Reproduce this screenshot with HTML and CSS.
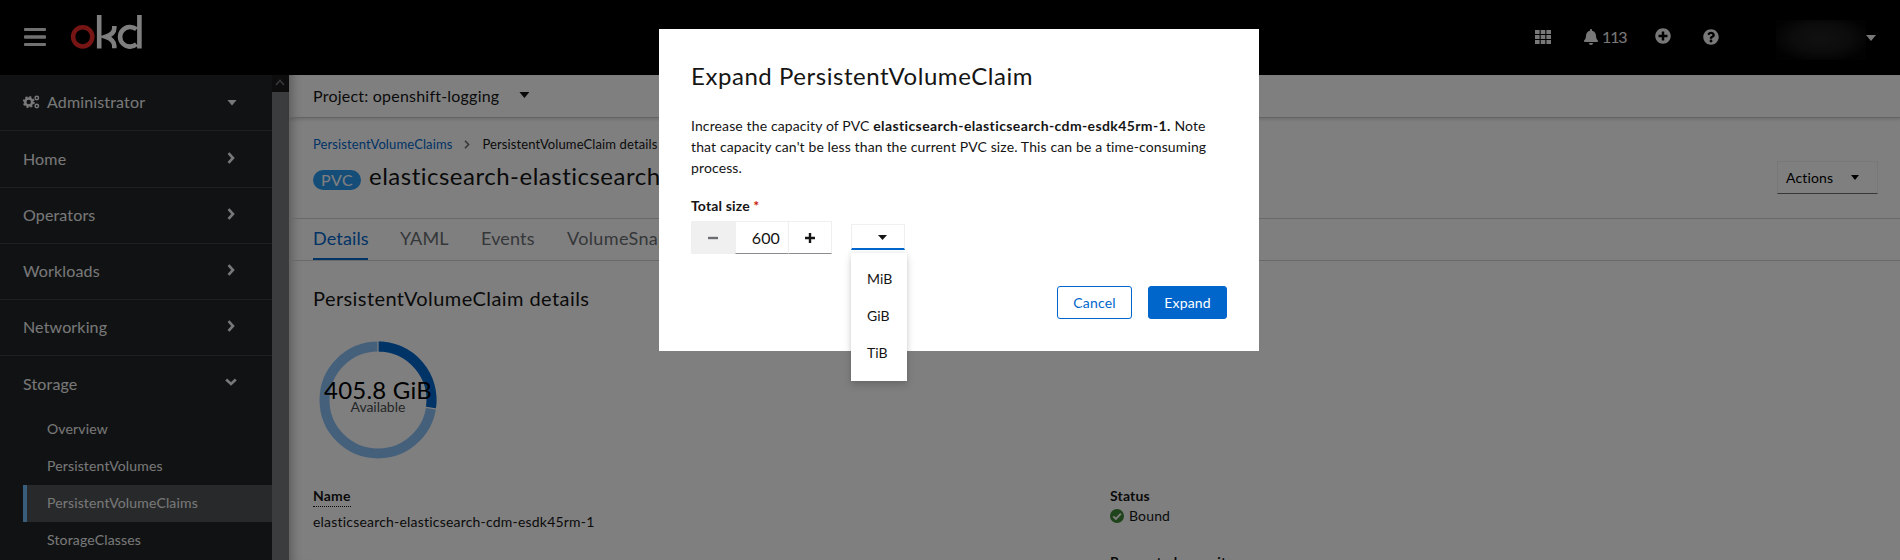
FILE: index.html
```html
<!DOCTYPE html>
<html lang="en">
<head>
<meta charset="utf-8">
<title>PersistentVolumeClaim details</title>
<link rel="stylesheet" href="styles.css">
</head>
<body>
<div class="app">
  <header class="masthead">
    <svg class="burger" width="22" height="20" viewBox="0 0 22 20"><rect y="1" width="22" height="3" rx="1"/><rect y="8.2" width="22" height="3.6" rx="1"/><rect y="16" width="22" height="3" rx="1"/></svg>
    <svg class="logo" width="74" height="36" viewBox="0 0 74 36" fill="none" stroke="#fff">
      <circle cx="12.7" cy="22.8" r="9.6" stroke="#ee2b2b" stroke-width="4.500"/>
      <path d="M29.200 1v33.500" stroke-width="4.600"/>
      <path d="M44.300 12v2q0 6-8.500 8.800q8.500 3 8.500 9v2.500" stroke-width="4.600"/>
      <path d="M66.500 15.300a10 9.800 0 1 0 0 15M69.400 1v33.500" stroke-width="4.600"/>
    </svg>
    <div class="tools">
      <svg class="grid" width="16" height="14" viewBox="0 0 16 14"><path d="M0 0h4.600v4H0zM5.700 0h4.600v4H5.700zM11.400 0H16v4h-4.600zM0 5h4.600v4H0zM5.700 5h4.600v4H5.700zM11.400 5H16v4h-4.600zM0 10h4.600v4H0zM5.700 10h4.600v4H5.700zM11.400 10H16v4h-4.600z"/></svg>
      <svg class="bell" width="14" height="16" viewBox="0 0 448 512"><path d="M224 512c35.320 0 63.970-28.650 63.970-64H160.030c0 35.350 28.650 64 63.970 64zm215.390-149.710c-19.320-20.760-55.470-51.990-55.470-154.290 0-77.700-54.480-139.900-127.940-155.160V32c0-17.670-14.320-32-31.980-32s-31.980 14.330-31.980 32v20.840C118.560 68.100 64.080 130.300 64.080 208c0 102.300-36.150 133.530-55.470 154.290-6 6.450-8.660 14.160-8.610 21.710.11 16.400 12.980 32 32.100 32h383.800c19.120 0 32-15.600 32.100-32 .05-7.550-2.610-15.270-8.610-21.710z"/></svg>
      <span class="count">113</span>
      <svg class="plus" width="16" height="16" viewBox="0 0 512 512"><path d="M256 8C119 8 8 119 8 256s111 248 248 248 248-111 248-248S393 8 256 8zm144 276c0 6.600-5.400 12-12 12h-92v92c0 6.600-5.400 12-12 12h-56c-6.600 0-12-5.400-12-12v-92h-92c-6.600 0-12-5.400-12-12v-56c0-6.600 5.400-12 12-12h92v-92c0-6.600 5.400-12 12-12h56c6.600 0 12 5.400 12 12v92h92c6.600 0 12 5.400 12 12v56z"/></svg>
      <svg class="help" width="16" height="16" viewBox="0 0 512 512"><path d="M504 256c0 136.997-111.043 248-248 248S8 392.997 8 256C8 119.083 119.043 8 256 8s248 111.083 248 248zM262.655 90c-54.497 0-89.255 22.957-116.549 63.758-3.536 5.286-2.353 12.415 2.715 16.258l34.699 26.310c5.205 3.947 12.621 3.008 16.665-2.122 17.864-22.658 30.113-35.797 57.303-35.797 20.429 0 45.698 13.148 45.698 32.958 0 14.976-12.363 22.667-32.534 33.976C247.128 238.528 216 254.941 216 296v4c0 6.627 5.373 12 12 12h56c6.627 0 12-5.373 12-12v-1.333c0-28.462 83.186-29.647 83.186-106.667 0-58.002-60.165-102-116.531-102zM256 338c-25.365 0-46 20.635-46 46 0 25.364 20.635 46 46 46s46-20.636 46-46c0-25.365-20.635-46-46-46z"/></svg>
      <span class="user"></span>
      <i class="caret"></i>
    </div>
  </header>
  <div class="body">
    <nav class="sidebar">
      <div class="nav-item first"><svg class="cogs" width="17" height="14" viewBox="0 0 17 14"><circle cx="5.700" cy="7" r="3.500" fill="none" stroke="currentColor" stroke-width="2.600"/><circle cx="5.700" cy="7" r="5" fill="none" stroke="currentColor" stroke-width="2" stroke-dasharray="2 1.930"/><circle cx="13.800" cy="3" r="1.700" fill="none" stroke="currentColor" stroke-width="1.500"/><circle cx="13.800" cy="11" r="1.700" fill="none" stroke="currentColor" stroke-width="1.500"/></svg><span>Administrator</span><i class="caret"></i></div>
      <div class="nav-item"><span>Home</span><svg class="chev" viewBox="0 0 8 12"><path d="M1.500 1.200L6 6l-4.500 4.800"/></svg></div>
      <div class="nav-item"><span>Operators</span><svg class="chev" viewBox="0 0 8 12"><path d="M1.500 1.200L6 6l-4.500 4.800"/></svg></div>
      <div class="nav-item"><span>Workloads</span><svg class="chev" viewBox="0 0 8 12"><path d="M1.500 1.200L6 6l-4.500 4.800"/></svg></div>
      <div class="nav-item"><span>Networking</span><svg class="chev" viewBox="0 0 8 12"><path d="M1.500 1.200L6 6l-4.500 4.800"/></svg></div>
      <div class="nav-item open"><span>Storage</span><svg class="chev down" viewBox="0 0 12 8"><path d="M1.200 1.500L6 6l4.800-4.500"/></svg></div>
      <ul class="subnav">
        <li>Overview</li><li>PersistentVolumes</li><li class="active">PersistentVolumeClaims</li><li>StorageClasses</li>
      </ul>
    </nav>
    <div class="scrollbar"><div class="scroll-up"><svg width="10" height="7" viewBox="0 0 10 7"><path d="M1 6l4-4.500L9 6"/></svg></div></div>
    <main class="main">
      <div class="project"><span>Project: openshift-logging</span><i class="caret"></i></div>
      <div class="crumbs"><a>PersistentVolumeClaims</a><svg width="6" height="9" viewBox="0 0 6 9"><path d="M1 .7l3.600 3.800L1 8.300"/></svg><span>PersistentVolumeClaim details</span></div>
      <div class="title-row">
        <span class="badge">PVC</span><h1>elasticsearch-elasticsearch-cdm-esdk45rm-1</h1>
        <button class="actions"><span>Actions</span><i class="caret"></i></button>
      </div>
      <div class="tabs"><span class="tab current">Details</span><span class="tab t-yaml">YAML</span><span class="tab t-events">Events</span><span class="tab t-snap">VolumeSnapshots</span></div>
      <section class="details">
        <h2>PersistentVolumeClaim details</h2>
        <svg class="donut" width="130" height="130" viewBox="-65 -65 130 130">
          <g fill="none" stroke-width="10">
            <circle r="53.500" stroke="#8bc1f7"/>
            <path d="M0 -53.500A53.500 53.500 0 0 1 52.900 8.200" stroke="#06c"/>
          </g>
          <path d="M0 -59v11M48 7.400l11 1.800" stroke="#fff" stroke-width="1.200"/>
          <text class="amount" x="0" y="-1" textLength="108">405.8 GiB</text>
          <text class="avail" x="0" y="12" textLength="55">Available</text>
        </svg>
        <div class="facts">
          <dl class="fact-name"><dt><span>Name</span></dt><dd>elasticsearch-elasticsearch-cdm-esdk45rm-1</dd></dl>
          <dl class="fact-status"><dt>Status</dt><dd><svg width="14" height="14" viewBox="0 0 14 14"><circle cx="7" cy="7" r="7" fill="#3e8635"/><path d="M3.300 7.300l2.600 2.600 5-5.200" fill="none" stroke="#fff" stroke-width="1.900"/></svg>Bound</dd><dt class="req">Requested capacity</dt></dl>
        </div>
      </section>
    </main>
  </div>
</div>
<div class="backdrop">
  <div class="modal">
    <h1>Expand PersistentVolumeClaim</h1>
    <p>Increase the capacity of PVC <b>elasticsearch-elasticsearch-cdm-esdk45rm-1.</b> Note<br>that capacity can't be less than the current PVC size. This can be a time-consuming<br>process.</p>
    <label>Total size <em>*</em></label>
    <div class="size">
      <div class="number"><span class="minus"><svg width="12" height="12"><path d="M1 6h10"/></svg></span><span class="value">600</span><span class="add"><svg width="12" height="12"><path d="M1 6h10M6 1v10"/></svg></span></div>
      <div class="unit"><i class="caret"></i>
        <ul class="menu"><li>MiB</li><li>GiB</li><li>TiB</li></ul>
      </div>
    </div>
    <div class="buttons"><button class="cancel">Cancel</button><button class="expand">Expand</button></div>
  </div>
</div>
</body>
</html>
```
FILE: styles.css
```css
* { box-sizing: border-box; margin: 0; padding: 0; }
body { height: 560px; overflow: hidden; font: 14px/21px Lato, "Open Sans", sans-serif; color: #151515; letter-spacing: .15px; }
ul { list-style: none; }
button { font: inherit; letter-spacing: inherit; }
svg { display: block; flex: none; }
h1, h2 { font-weight: 400; letter-spacing: .5px; }
.caret { display: block; flex: none; width: 10px; height: 6px; background: currentColor; clip-path: polygon(0 0, 100% 0, 50% 100%); }
.app { height: 560px; display: flex; flex-direction: column; overflow: hidden; background: #fff; }

.masthead { flex: none; height: 75px; background: #000; color: #f0f0f0; display: flex; align-items: flex-start; padding-left: 24px; }
.burger { margin-top: 27px; fill: #e2e2e2; }
.logo { margin: 14px 0 0 24px; }
.tools { margin: 0 24px 0 auto; height: 75px; display: flex; align-items: flex-start; fill: #f0f0f0; }
.grid { margin-top: 30px; }
.bell { margin: 29px 0 0 33px; }
.count { margin: 26px 0 0 4px; width: 20px; font-size: 16px; letter-spacing: -1.1px; }
.plus { margin: 28px 0 0 33px; }
.help { margin: 29px 0 0 32px; }
.user { margin: 20px 0 0 57px; width: 90px; height: 40px; background: radial-gradient(ellipse at 50% 45%, #222 0, #181818 45%, #040404 80%); }
.masthead .caret { margin-top: 35px; }

.body { flex: 1; display: flex; min-height: 0; }
.sidebar { width: 272px; background: #212427; color: #f0f0f0; }
.nav-item { height: 56px; padding: 0 36px 2px 23px; display: flex; align-items: center; justify-content: space-between; border-bottom: 1px solid #3c3f42; font-size: 16px; }
.nav-item.first { justify-content: flex-start; }
.nav-item.first span { margin-left: 7px; }
.nav-item.first .caret { margin: 2px -1px 0 auto; }
.nav-item:nth-child(2) { height: 57px; }
.nav-item.open { height: 55px; border: 0; padding-bottom: 1px; }
.chev { width: 8px; height: 12px; fill: none; stroke: currentColor; stroke-width: 2.6; margin: -1px 1px 0 0; }
.chev.down { width: 12px; height: 8px; margin: -3px -1px 0 0; }
.subnav { margin: 0 0 0 23px; }
.subnav li { height: 37px; line-height: 36px; padding-left: 24px; }
.subnav .active { background: #4f5255; border-left: 4px solid #73bcf7; padding-left: 20px; }
.scrollbar { width: 17px; background: #77797c; }
.scroll-up { height: 17px; background: #1a1b1d; padding: 4px 3px; }
.scroll-up svg { fill: none; stroke: #6a6e73; stroke-width: 1.6; }

.main { flex: 1; min-width: 0; box-shadow: inset 12px 0 12px -10px rgba(0,0,0,.35); }
.project { height: 43px; border-bottom: 1px solid #c8c8c8; box-shadow: 0 2px 3px rgba(0,0,0,.12); display: flex; align-items: center; padding: 0 0 2px 24px; font-size: 16px; letter-spacing: .22px; }
.project .caret { margin-left: 20px; }
.crumbs { display: flex; align-items: center; padding-left: 24px; margin-top: 16px; height: 21px; font-size: 13px; letter-spacing: .11px; }
.crumbs a { color: #06c; }
.crumbs svg { margin: 0 12px; fill: none; stroke: #6a6e73; stroke-width: 1.6; }
.title-row { display: flex; align-items: flex-start; height: 63px; padding: 6px 22px 0 24px; }
.badge { margin-top: 9px; width: 48px; height: 20px; border-radius: 20px; background: #2b9af3; color: #fff; font-size: 16px; line-height: 19px; letter-spacing: .5px; text-align: center; }
.title-row h1 { margin: -1px 0 0 8px; font-size: 24px; line-height: 31px; }
.actions { margin: 0 0 0 auto; width: 101px; height: 33px; background: none; border: 1px solid #f0f0f0; border-bottom-color: #6a6e73; display: flex; align-items: center; padding: 0 18px 0 8px; justify-content: space-between; }
.actions .caret { width: 8px; height: 5px; }
.tabs { height: 43px; border-top: 1px solid #d2d2d2; border-bottom: 1px solid #d2d2d2; display: flex; padding-left: 24px; font-size: 18px; line-height: 39px; color: #6a6e73; }
.tab.current { color: #06c; width: 55px; border-bottom: 2px solid #06c; }
.t-yaml { margin-left: 32px; width: 48px; }
.t-events { margin-left: 33px; width: 53px; }
.t-snap { margin-left: 33px; letter-spacing: .35px; }
.details { padding: 23px 24px 0; }
.details h2 { font-size: 20px; line-height: 28px; letter-spacing: .42px; }
.donut { margin-top: 23px; }
.donut text { text-anchor: middle; font-size: 24px; }
.donut .avail { font-size: 14px; fill: #4a4d50; }
.facts { display: flex; margin-top: 20px; }
.facts dt { font-weight: 700; }
.fact-name { width: 797px; }
.fact-name dt span { display: inline-block; border-bottom: 1px dotted #151515; }
.fact-name dd { margin-top: 4px; letter-spacing: .2px; }
.fact-status dd { display: flex; align-items: center; gap: 5px; margin-top: -1px; }
.fact-status svg { margin-top: 1px; }
.req { margin-top: 25px; }

.backdrop { position: absolute; inset: 0; background: rgba(0,0,0,.5); display: flex; justify-content: center; align-items: flex-start; padding: 29px 0 0 18px; }
.modal { width: 600px; height: 322px; background: #fff; padding: 31px 32px; display: flex; flex-direction: column; }
.modal h1 { font-size: 24px; line-height: 31px; margin-bottom: 24px; letter-spacing: .55px; }
.modal p { white-space: nowrap; letter-spacing: .12px; }
.modal b { letter-spacing: .38px; }
.modal label { font-weight: 700; margin-top: 17px; }
.modal em { color: #c9190b; font-style: normal; }
.size { display: flex; margin-top: 5px; align-items: flex-start; }
.number { display: flex; width: 141px; height: 33px; }
.number span { display: flex; align-items: center; justify-content: center; border: 1px solid #f0f0f0; border-bottom-color: #8a8d90; }
.number svg { fill: none; stroke: #151515; stroke-width: 2.4; }
.number .minus { width: 44px; background: #f0f0f0; border-color: #f0f0f0; }
.number .minus svg { stroke: #6a6e73; }
.number .value { width: 54px; font-size: 16px; justify-content: flex-end; padding: 0 8px 1px 0; }
.number .add { width: 43px; border-left: 0; }
.unit { position: relative; margin: 3px 0 0 19px; width: 54px; height: 26px; border: 1px solid #f0f0f0; border-bottom: 2px solid #06c; padding: 10px 0 0 26px; }
.unit .caret { width: 9px; height: 5px; }
.menu { position: absolute; left: -1px; top: 28px; width: 56px; height: 128px; background: #fff; padding: 8px 0 0 16px; box-shadow: 0 4px 8px rgba(0,0,0,.16), 0 0 4px rgba(0,0,0,.08); }
.menu li { height: 37px; line-height: 36px; letter-spacing: 0; }
.buttons { display: flex; justify-content: flex-end; gap: 16px; margin-top: 32px; }
.buttons button { height: 33px; border: 1px solid #06c; border-radius: 3px; color: #06c; background: #fff; width: 75px; }
.buttons .expand { width: 79px; background: #06c; color: #fff; }
```
